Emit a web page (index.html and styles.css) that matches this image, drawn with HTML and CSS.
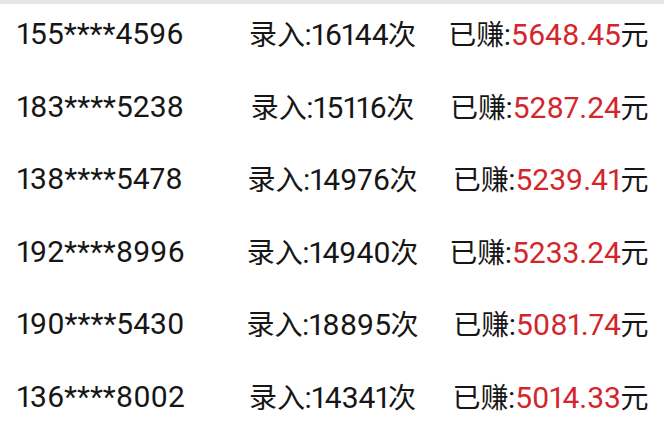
FILE: index.html
```html
<!DOCTYPE html>
<html lang="zh-CN">
<head>
<meta charset="utf-8">
<link rel="stylesheet" href="styles.css">
</head>
<body>
<div class="topbar"></div>
<ul class="list">
  <li class="row"><span class="phone">155****4596</span><span class="count"><span class="cjk">录入</span>:16144<span class="cjk">次</span></span><span class="earn"><span class="cjk">已赚</span>:<em class="money">5648.45</em><span class="cjk">元</span></span></li>
  <li class="row"><span class="phone">183****5238</span><span class="count"><span class="cjk">录入</span>:15116<span class="cjk">次</span></span><span class="earn"><span class="cjk">已赚</span>:<em class="money">5287.24</em><span class="cjk">元</span></span></li>
  <li class="row"><span class="phone">138****5478</span><span class="count"><span class="cjk">录入</span>:14976<span class="cjk">次</span></span><span class="earn"><span class="cjk">已赚</span>:<em class="money">5239.41</em><span class="cjk">元</span></span></li>
  <li class="row"><span class="phone">192****8996</span><span class="count"><span class="cjk">录入</span>:14940<span class="cjk">次</span></span><span class="earn"><span class="cjk">已赚</span>:<em class="money">5233.24</em><span class="cjk">元</span></span></li>
  <li class="row"><span class="phone">190****5430</span><span class="count"><span class="cjk">录入</span>:18895<span class="cjk">次</span></span><span class="earn"><span class="cjk">已赚</span>:<em class="money">5081.74</em><span class="cjk">元</span></span></li>
  <li class="row"><span class="phone">136****8002</span><span class="count"><span class="cjk">录入</span>:14341<span class="cjk">次</span></span><span class="earn"><span class="cjk">已赚</span>:<em class="money">5014.33</em><span class="cjk">元</span></span></li>
</ul>
</body>
</html>
```
FILE: styles.css
```css
html, body {
  margin: 0;
  padding: 0;
  background: #ffffff;
}
body {
  width: 664px;
  height: 440px;
  overflow: hidden;
  font-family: Roboto, "Noto Sans CJK SC", sans-serif;
  font-variant-numeric: proportional-nums;
  color: #161616;
}
.topbar {
  height: 4px;
  background: #e6e6e6;
}
.list {
  list-style: none;
  margin: 0;
  padding: 0 16px 0 17px;
  display: flex;
  flex-direction: column;
  gap: 14.6px;
}
.row {
  display: grid;
  grid-template-columns: minmax(0, 1fr) auto minmax(0, 1fr);
  align-items: center;
  height: 58px;
  font-size: 30px;
  line-height: 58px;
  white-space: nowrap;
}
.phone { text-align: left; }
.count { text-align: center; }
.earn { text-align: right; }
.cjk {
  font-family: "Noto Sans CJK SC", sans-serif;
  font-size: 28px;
  margin: 0 -0.5px;
}
.money {
  font-style: normal;
  color: #d2262c;
}
```
